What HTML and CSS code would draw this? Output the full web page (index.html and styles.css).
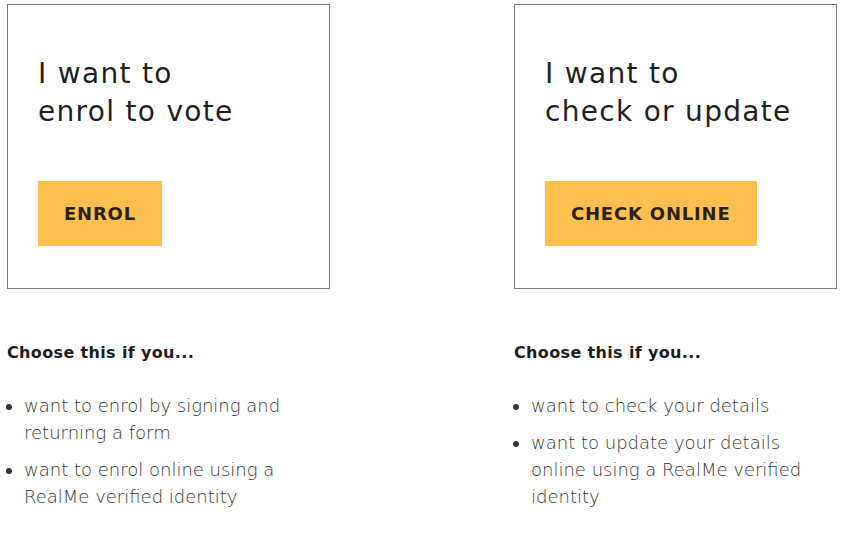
FILE: index.html
```html
<!DOCTYPE html>
<html lang="en">
<head>
<meta charset="utf-8">
<title>Enrol or update</title>
<link rel="stylesheet" href="styles.css">
</head>
<body>
<main class="options">
  <section class="option">
    <div class="card">
      <h2 class="card-title">I want to<br>enrol to vote</h2>
      <a class="btn" href="#">ENROL</a>
    </div>
    <h3 class="choose">Choose this if you...</h3>
    <ul class="reasons">
      <li>want to enrol by signing and returning a form</li>
      <li>want to enrol online using a RealMe verified identity</li>
    </ul>
  </section>
  <section class="option">
    <div class="card">
      <h2 class="card-title">I want to<br>check or update</h2>
      <a class="btn" href="#">CHECK ONLINE</a>
    </div>
    <h3 class="choose">Choose this if you...</h3>
    <ul class="reasons">
      <li>want to check your details</li>
      <li>want to update your details online using a RealMe verified identity</li>
    </ul>
  </section>
</main>
</body>
</html>
```

FILE: styles.css
```css
html, body {
  margin: 0;
  padding: 0;
  background: #ffffff;
}

body {
  font-family: "DejaVu Sans", "Open Sans", sans-serif;
  color: #222222;
}

.options {
  display: grid;
  grid-template-columns: 323px 323px;
  column-gap: 184px;
  padding: 4px 0 0 7px;
}

.option {
  display: flex;
  flex-direction: column;
}

.card {
  border: 1px solid #7a7a7a;
  height: 285px;
  box-sizing: border-box;
  padding: 50px 10px 0 30px;
  display: flex;
  flex-direction: column;
  align-items: flex-start;
}

.card-title {
  margin: 0;
  font-size: 28px;
  line-height: 38px;
  font-weight: 500;
  letter-spacing: 1.3px;
  color: #1f1f1f;
}

.btn {
  margin-top: 50px;
  display: flex;
  align-items: center;
  height: 65px;
  padding: 0 26px;
  background: #fdbf50;
  color: #2a1f10;
  font-weight: 700;
  font-size: 18px;
  letter-spacing: 0.8px;
  text-decoration: none;
}

.choose {
  margin: 53px 0 0 0;
  font-size: 16px;
  line-height: 22px;
  font-weight: 700;
  letter-spacing: 0.35px;
  color: #1c1c1c;
}

.reasons {
  margin: 28px 0 0 0;
  padding: 0 0 0 17px;
  font-size: 18px;
  line-height: 27px;
  font-weight: 300;
  color: #353535;
}

.reasons li {
  margin-bottom: 10px;
}
```
